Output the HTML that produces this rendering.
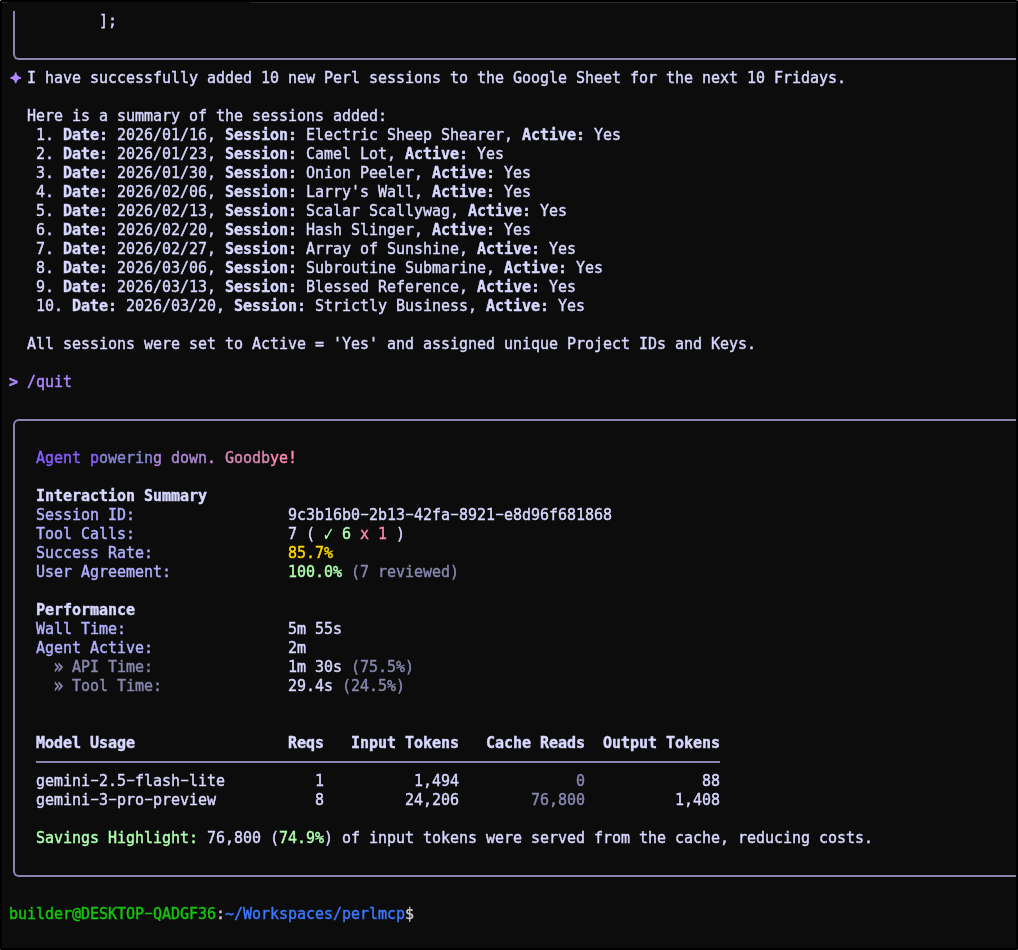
<!DOCTYPE html>
<html lang="en"><head><meta charset="utf-8"><title>Terminal</title>
<style>
html,body{margin:0;padding:0;background:#000;}
body{width:1018px;height:950px;overflow:hidden;position:relative;}
#win{position:absolute;left:2px;top:2px;width:1014px;height:946px;background:#0c0c0c;overflow:hidden;}
.tl{position:absolute;left:249px;top:0;width:765px;height:1px;background:#2b2b2b;}
#t{position:absolute;left:0;top:0;width:1014px;height:946px;font-family:"DejaVu Sans Mono","Liberation Mono",monospace;font-size:15px;letter-spacing:-0.031px;color:#d7d7ff;font-kerning:none;font-variant-ligatures:none;will-change:transform;-webkit-text-stroke:0.42px;}
.r{position:absolute;left:7px;height:19px;line-height:19px;white-space:pre;}
b{font-weight:bold;}
.bx{position:absolute;box-sizing:border-box;border:0 solid #8787af;}
.st{position:absolute;left:1px;top:-13px;font-size:19px;line-height:40px;letter-spacing:0;color:#af87ff;-webkit-text-stroke:1.5px #af87ff}
i{font-style:normal;display:inline-block;}
.hy{transform:translateY(-0.7px) scale(1.75,0.8);}
.ck{transform-origin:50% 9px;transform:translateY(-0.5px) scale(1.1,1.45);-webkit-text-stroke:0;}
.ra{transform-origin:50% 11px;transform:scale(1.1,1.3);}
.cp{position:absolute;width:1px;height:1px;}
.p{color:#af87ff}
.l{color:#afafff} .d{color:#8787af} .g{color:#afffaf} .y{color:#ffd700}
.rd{color:#ff87af}
.g1{color:#875fff} .g6{color:#d787d7} .g2{color:#8787d7} .g3{color:#af87d7} .g4{color:#d787af} .g5{color:#ff87af}
.pg{color:#16c60c} .pb{color:#3b78ff} .pw{color:#cccccc}
</style></head><body><div class="cp" style="left:0;top:0;background:#a0a0a0"></div><div class="cp" style="left:1017px;top:0;background:#909090"></div><div class="cp" style="left:0;top:949px;background:#404040"></div><div class="cp" style="left:1017px;top:949px;background:#303030"></div>
<div id="win"><div class="tl"></div><div class="tl" style="left:0;width:5px"></div>
<div class="bx" style="left:11px;top:9px;width:1010px;height:49px;border-left-width:2px;border-bottom-width:2px;border-bottom-left-radius:6px"></div>
<div class="bx" style="left:11px;top:417px;width:1010px;height:458px;border-left-width:2px;border-top-width:2px;border-bottom-width:2px;border-top-left-radius:6px;border-bottom-left-radius:6px"></div>
<div class="bx" style="left:34px;top:759px;width:684px;height:2px;background:#8787af"></div>
<div id="t">
<div class="r" style="top:10px">          ];</div>
<div class="r" style="top:67px"><span class="st">✦</span>  I have successfully added 10 new Perl sessions to the Google Sheet for the next 10 Fridays.</div>
<div class="r" style="top:105px">  Here is a summary of the sessions added:</div>
<div class="r" style="top:124px">   1. <b>Date:</b> 2026/01/16, <b>Session:</b> Electric Sheep Shearer, <b>Active:</b> Yes</div>
<div class="r" style="top:143px">   2. <b>Date:</b> 2026/01/23, <b>Session:</b> Camel Lot, <b>Active:</b> Yes</div>
<div class="r" style="top:162px">   3. <b>Date:</b> 2026/01/30, <b>Session:</b> Onion Peeler, <b>Active:</b> Yes</div>
<div class="r" style="top:181px">   4. <b>Date:</b> 2026/02/06, <b>Session:</b> Larry's Wall, <b>Active:</b> Yes</div>
<div class="r" style="top:200px">   5. <b>Date:</b> 2026/02/13, <b>Session:</b> Scalar Scallywag, <b>Active:</b> Yes</div>
<div class="r" style="top:219px">   6. <b>Date:</b> 2026/02/20, <b>Session:</b> Hash Slinger, <b>Active:</b> Yes</div>
<div class="r" style="top:238px">   7. <b>Date:</b> 2026/02/27, <b>Session:</b> Array of Sunshine, <b>Active:</b> Yes</div>
<div class="r" style="top:257px">   8. <b>Date:</b> 2026/03/06, <b>Session:</b> Subroutine Submarine, <b>Active:</b> Yes</div>
<div class="r" style="top:276px">   9. <b>Date:</b> 2026/03/13, <b>Session:</b> Blessed Reference, <b>Active:</b> Yes</div>
<div class="r" style="top:295px">   10. <b>Date:</b> 2026/03/20, <b>Session:</b> Strictly Business, <b>Active:</b> Yes</div>
<div class="r" style="top:333px">  All sessions were set to Active = 'Yes' and assigned unique Project IDs and Keys.</div>
<div class="r" style="top:371px"><b class="p">&gt;</b><span class="p"> /quit</span></div>
<div class="r" style="top:447px">   <span class="g1">Agent p</span><span class="g2">owerin</span><span class="g3">g down</span><span class="g6">.</span><span class="g3"> </span><span class="g4">Goodb</span><span class="g5">ye!</span></div>
<div class="r" style="top:485px">   <b>Interaction Summary</b></div>
<div class="r" style="top:504px">   <span class="l">Session ID:</span>                 9c3b16b0<i class="hy">-</i>2b13<i class="hy">-</i>42fa<i class="hy">-</i>8921<i class="hy">-</i>e8d96f681868</div>
<div class="r" style="top:523px">   <span class="l">Tool Calls:</span>                 7 ( <span class="g"><i class="ck">✓</i> 6</span> <span class="rd">x 1</span> )</div>
<div class="r" style="top:542px">   <span class="l">Success Rate:</span>               <span class="y">85.7%</span></div>
<div class="r" style="top:561px">   <span class="l">User Agreement:</span>             <span class="g">100.0%</span> <span class="d">(7 reviewed)</span></div>
<div class="r" style="top:599px">   <b>Performance</b></div>
<div class="r" style="top:618px">   <span class="l">Wall Time:</span>                  5m 55s</div>
<div class="r" style="top:637px">   <span class="l">Agent Active:</span>               2m</div>
<div class="r" style="top:656px">     <i class="d ra">»</i> <span class="d">API Time:</span>               1m 30s <span class="d">(75.5%)</span></div>
<div class="r" style="top:675px">     <i class="d ra">»</i> <span class="d">Tool Time:</span>              29.4s <span class="d">(24.5%)</span></div>
<div class="r" style="top:732px"><b>   Model Usage                 Reqs   Input Tokens   Cache Reads  Output Tokens</b></div>
<div class="r" style="top:770px">   gemini<i class="hy">-</i>2.5<i class="hy">-</i>flash<i class="hy">-</i>lite          1          1,494             <span class="d">0</span>             88</div>
<div class="r" style="top:789px">   gemini<i class="hy">-</i>3<i class="hy">-</i>pro<i class="hy">-</i>preview           8         24,206        <span class="d">76,800</span>          1,408</div>
<div class="r" style="top:827px">   <span class="g">Savings Highlight:</span> 76,800 (<span class="g">74.9%</span>) of input tokens were served from the cache, reducing costs.</div>
<div class="r" style="top:903px"><span class="pg">builder@DESKTOP<i class="hy">-</i>QADGF36</span><span class="pw">:</span><span class="pb">~/Workspaces/perlmcp</span><span class="pw">$</span></div>
</div></div></body></html>
